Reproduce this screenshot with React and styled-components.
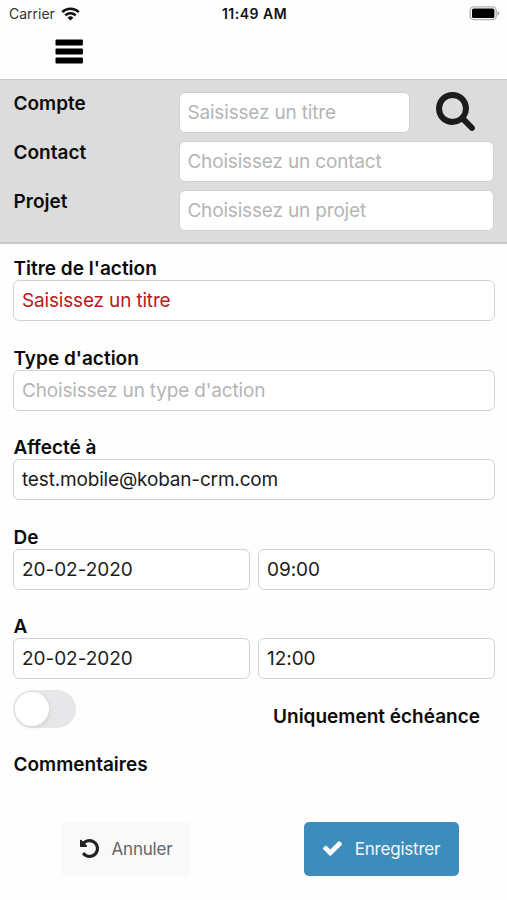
import { useState } from "react";
import styled, { createGlobalStyle } from "styled-components";


function WifiIcon(){
    return(
        <svg width="19" height="14" viewBox="0 0 19 14" fill="none" stroke="#111" strokeWidth="2.4">
            <path d="M1.2 5.2 A11.8 11.8 0 0 1 17.8 5.2" />
            <path d="M4.3 8.4 A7.4 7.4 0 0 1 14.7 8.4" />
            <path d="M6.6 10.7 A4.1 4.1 0 0 1 12.4 10.7 L9.5 13.6 Z" fill="#111" stroke="none" />
        </svg>
    )
}

function BatteryIcon(){
    return(
        <svg width="31" height="15" viewBox="0 0 31 15">
            <rect x="1.2" y="0.9" width="26" height="12.8" rx="3.6" fill="#fff" stroke="#b0b0b0" strokeWidth="1.3" />
            <rect x="3" y="2.6" width="22.4" height="9.4" rx="1.6" fill="#000" />
            <path d="M28.5 5 Q30.3 5.7 30.3 7.3 Q30.3 8.9 28.5 9.6 Z" fill="#a8a8a8" />
        </svg>
    )
}

function MenuIcon(){
    return(
        <svg width="28" height="25" viewBox="0 0 28 25" fill="#000">
            <rect x="0.5" y="0.6" width="27.4" height="6" rx="1" />
            <rect x="0.5" y="9.6" width="27.4" height="6" rx="1" />
            <rect x="0.5" y="18.6" width="27.4" height="6" rx="1" />
        </svg>
    )
}

function SearchIcon(){
    return(
        <svg width="39" height="39" viewBox="64 128 1664 1664" fill="#1c1c1c">
            <path d="M1216 832q0-185-131.5-316.5t-316.5-131.5-316.5 131.5-131.5 316.5 131.5 316.5 316.5 131.5 316.5-131.5 131.5-316.5zm512 832q0 52-38 90t-90 38q-54 0-90-38l-343-342q-179 124-399 124-143 0-273.5-55.5t-225-150-150-225-55.5-273.5 55.5-273.5 150-225 225-150 273.5-55.5 273.5 55.5 225 150 150 225 55.5 273.5q0 220-124 399l343 343q37 37 37 90z" />
        </svg>
    )
}

function UndoIcon(){
    return(
        <svg width="19" height="19" viewBox="0 128 1536 1536" fill="#222">
            <path d="M1536 896q0 156-61 298t-164 245-245 164-298 61q-172 0-327-72.5t-264-204.5q-7-10-6.5-22.5t8.5-20.5l137-138q10-9 25-9 16 2 23 12 73 95 179 147t225 52q104 0 198.5-40.5t163.5-109.5 109.5-163.5 40.5-198.5-40.5-198.5-109.5-163.5-163.5-109.5-198.5-40.5q-98 0-188 35.5t-160 101.5l137 138q31 30 14 69-17 40-59 40h-448q-26 0-45-19t-19-45v-448q0-42 40-59 39-17 69 14l130 129q107-101 244.5-156.5t284.5-55.5q156 0 298 61t245 164 164 245 61 298z" />
        </svg>
    )
}

function CheckIcon(){
    return(
        <svg width="19" height="15" viewBox="121 334 1550 1188" fill="#fff">
            <path d="M1671 566q0 40-28 68l-724 724-136 136q-28 28-68 28t-68-28l-136-136-362-362q-28-28-28-68t28-68l136-136q28-28 68-28t68 28l294 295 656-657q28-28 68-28t68 28l136 136q28 28 28 68z" />
        </svg>
    )
}

function App(){
    const [dueOnly, setDueOnly] = useState(false);

    return(
    <Screen>
        <GlobalStyle />
        <StatusBar>
            <Carrier>Carrier <WifiIcon /></Carrier>
            <Clock>11:49 AM</Clock>
            <Battery><BatteryIcon /></Battery>
        </StatusBar>
        <NavBar>
            <MenuIcon />
        </NavBar>
        <LinkedTo>
            <LinkRow>
                <Label>Compte</Label>
                <Input placeholder="Saisissez un titre" />
                <SearchButton><SearchIcon /></SearchButton>
            </LinkRow>
            <LinkRow>
                <Label>Contact</Label>
                <Input $wide placeholder="Choisissez un contact" />
            </LinkRow>
            <LinkRow>
                <Label>Projet</Label>
                <Input $wide placeholder="Choisissez un projet" />
            </LinkRow>
        </LinkedTo>
        <Form>
            <Field>
                <Label>Titre de l'action</Label>
                <Input $error placeholder="Saisissez un titre" />
            </Field>
            <Field>
                <Label>Type d'action</Label>
                <Input placeholder="Choisissez un type d'action" />
            </Field>
            <Field>
                <Label>Affecté à</Label>
                <Input defaultValue="test.mobile@koban-crm.com" />
            </Field>
            <Field>
                <Label>De</Label>
                <DateRow>
                    <Input $spacing="-0.05px" defaultValue="20-02-2020" />
                    <Input $spacing="-0.05px" defaultValue="09:00" />
                </DateRow>
            </Field>
            <Field>
                <Label>A</Label>
                <DateRow>
                    <Input $spacing="-0.05px" defaultValue="20-02-2020" />
                    <Input $spacing="-0.05px" defaultValue="12:00" />
                </DateRow>
            </Field>
        </Form>
        <SwitchRow>
            <Switch $on={dueOnly} onClick={()=>setDueOnly(!dueOnly)}>
                <Knob />
            </Switch>
            <Label>Uniquement échéance</Label>
        </SwitchRow>
        <Comments>
            <Label>Commentaires</Label>
        </Comments>
        <Actions>
            <Button $width="130px"><UndoIcon />Annuler</Button>
            <Button $primary $width="155px"><CheckIcon />Enregistrer</Button>
        </Actions>
    </Screen>
    )
}

const GlobalStyle = createGlobalStyle`
    *{
        box-sizing: border-box;
    }
    body{
        margin: 0;
        background-color: #fefefe;
        font-family: Inter, "Liberation Sans", sans-serif;
    }
    svg{
        display: block;
        flex-shrink: 0;
    }
`

const Screen = styled.div`
    width: 507px;
    height: 900px;
    overflow: hidden;
    background-color: #fefefe;
`

const StatusBar = styled.div`
    display: grid;
    grid-template-columns: 1fr auto 1fr;
    align-items: center;
    height: 27px;
    padding: 0 7px 0 9px;
`

const Carrier = styled.div`
    display: flex;
    align-items: center;
    gap: 6px;
    font-size: 14px;
    color: #333;
`

const Clock = styled.div`
    font-size: 14px;
    font-weight: 600;
    letter-spacing: 0.5px;
    color: #111;
`

const Battery = styled.div`
    display: flex;
    justify-content: flex-end;
`

const NavBar = styled.div`
    height: 52px;
    padding: 12px 55px;
`

const LinkedTo = styled.div`
    display: flex;
    flex-direction: column;
    gap: 8px;
    height: 165px;
    padding: 12px 13px 0 13px;
    background-color: #dcdcdc;
    border-top: 1px solid #cacaca;
    border-bottom: 2px solid #c9c9c9;
`

const Label = styled.label`
    display: block;
    padding-left: 0.5px;
    font-size: 19px;
    font-weight: 600;
    line-height: 24px;
    color: #0c0c0c;
    white-space: nowrap;
`

const Input = styled.input`
    display: block;
    grid-column: ${props=> props.$wide ? "2 / 4" : "auto"};
    width: 100%;
    height: 41px;
    padding: 0 8px;
    border: 1px solid #d2d2d2;
    border-radius: 6px;
    outline: none;
    background-color: #fff;
    font-family: inherit;
    font-size: 19px;
    letter-spacing: ${props=> props.$spacing || "-0.17px"};
    color: #1c1c1c;
    &::placeholder{
        color: ${props=> props.$error ? "#b9191c" : "#b5b5b5"};
        opacity: 1;
    }
`

const LinkRow = styled.div`
    display: grid;
    grid-template-columns: 166px 231px 1fr;
    height: 41px;

    ${Input}{
        padding-left: 7.4px;
    }
`

const SearchButton = styled.div`
    display: flex;
    justify-content: center;
    padding-left: 7px;
`

const Form = styled.div`
    padding: 12px 12px 0 13px;

    label{
        padding-top: 1px;
        height: 24px;
    }
`

const Field = styled.div`
    height: 89.6px;
`

const DateRow = styled.div`
    display: grid;
    grid-template-columns: 1fr 1fr;
    gap: 8px;
`

const SwitchRow = styled.div`
    display: flex;
    justify-content: space-between;
    height: 48px;
    margin-top: -14px;
    padding: 0 27px 0 13px;
    label{
        padding-top: 15px;
    }
`

const Switch = styled.div`
    display: flex;
    justify-content: ${props=> props.$on ? "flex-end" : "flex-start"};
    width: 63px;
    height: 38px;
    padding: 2px;
    border-radius: 19px;
    background-color: ${props=> props.$on ? "#4cd964" : "#e7e7e9"};
`

const Knob = styled.div`
    width: 34px;
    height: 34px;
    border-radius: 50%;
    background-color: #fff;
    box-shadow: 1px 2px 4px rgba(0, 0, 0, 0.08);
`

const Comments = styled.div`
    height: 84px;
    padding: 15px 13px;
`

const Actions = styled.div`
    display: flex;
    justify-content: space-between;
    padding: 0 48px 0 61px;
`

const Button = styled.button`
    display: flex;
    align-items: center;
    justify-content: center;
    gap: 13px;
    width: ${props=> props.$width};
    height: 54px;
    padding: 0;
    border: none;
    border-radius: 5px;
    background-color: ${props=> props.$primary ? "#3c8dbc" : "#f9f9f9"};
    font-family: inherit;
    font-size: 17px;
    letter-spacing: -0.2px;
    color: ${props=> props.$primary ? "#f2f8fb" : "#666"};
`


export default App
